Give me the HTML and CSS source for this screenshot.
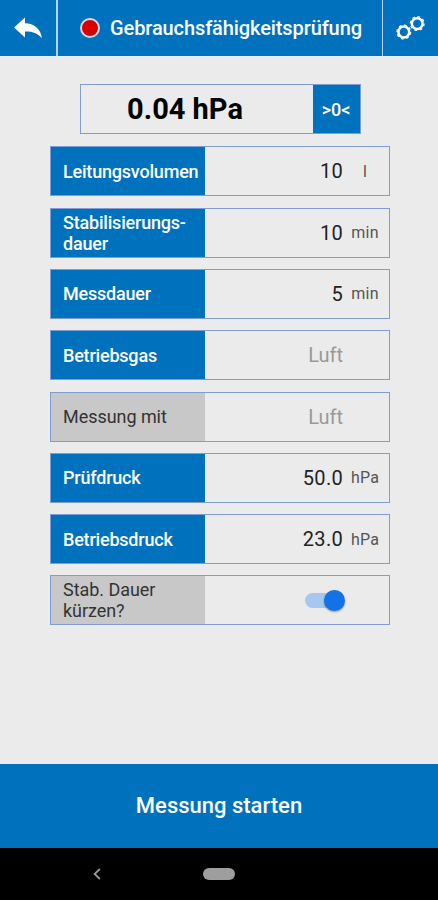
FILE: index.html
```html
<!DOCTYPE html>
<html lang="de">
<head>
    <meta charset="UTF-8">
    <meta name="viewport" content="width=device-width, initial-scale=1.0">
    <title>Gebrauchsfähigkeitsprüfung</title>
    <link rel="stylesheet" href="styles.css">
</head>
<body>

    <header class="header">
        <button class="back-btn" aria-label="Zurück">
            <svg width="30" height="24" viewBox="0 0 30 24">
                <path d="M1 10.5 L12 0.5 V6.2 C21 6.5 27.5 11.5 29 21.2 C24 16 19 14.4 12 14.6 V20.5 Z" fill="#fff"/>
            </svg>
        </button>
        <div class="title">
            <span class="status-dot"></span>
            <h1>Gebrauchsfähigkeitsprüfung</h1>
        </div>
        <button class="settings-btn" aria-label="Einstellungen">
            <svg width="30" height="26" viewBox="0 0 30 26" fill="none" stroke="#fff">
                <circle cx="7.8" cy="17" r="5.4" stroke-width="2.5"/>
                <circle cx="7.8" cy="17" r="6.9" stroke-width="1.2" stroke-dasharray="2.71 2.71"/>
                <circle cx="21.2" cy="8.6" r="5.4" stroke-width="2.5"/>
                <circle cx="21.2" cy="8.6" r="6.9" stroke-width="1.2" stroke-dasharray="2.71 2.71"/>
            </svg>
        </button>
    </header>

    <main class="content">
        <div class="display">
            <div class="reading">0.04 hPa</div>
            <button class="zero-btn">&gt;0&lt;</button>
        </div>

        <div class="rows">
            <div class="row">
                <div class="label">Leitungsvolumen</div>
                <div class="value">10</div>
                <div class="unit">l</div>
            </div>
            <div class="row">
                <div class="label">Stabilisierungs-<br>dauer</div>
                <div class="value">10</div>
                <div class="unit">min</div>
            </div>
            <div class="row">
                <div class="label">Messdauer</div>
                <div class="value">5</div>
                <div class="unit">min</div>
            </div>
            <div class="row">
                <div class="label">Betriebsgas</div>
                <div class="value muted">Luft</div>
                <div class="unit"></div>
            </div>
            <div class="row">
                <div class="label grey">Messung mit</div>
                <div class="value muted">Luft</div>
                <div class="unit"></div>
            </div>
            <div class="row">
                <div class="label">Prüfdruck</div>
                <div class="value">50.0</div>
                <div class="unit">hPa</div>
            </div>
            <div class="row">
                <div class="label">Betriebsdruck</div>
                <div class="value">23.0</div>
                <div class="unit">hPa</div>
            </div>
            <div class="row">
                <div class="label grey">Stab. Dauer<br>kürzen?</div>
                <div class="value"><span class="switch"><span class="thumb"></span></span></div>
                <div class="unit"></div>
            </div>
        </div>
    </main>

    <button class="start-btn">Messung starten</button>

    <nav class="navbar">
        <svg class="nav-back" width="10" height="14" viewBox="0 0 10 14">
            <path d="M7.8 2 L2.6 7 L7.8 12" fill="none" stroke="#999" stroke-width="1.8"/>
        </svg>
        <span class="nav-home"></span>
    </nav>

</body>
</html>
```
FILE: styles.css
```css
* {
    box-sizing: border-box;
}
body {
    font-family: Roboto, "Liberation Sans", sans-serif;
    display: flex;
    flex-direction: column;
    height: 900px;
    margin: 0;
    background-color: #ebebeb;
    color: #222;
}
button {
    padding: 0;
    border: none;
    background: #0071bc;
    color: #fff;
    font-family: inherit;
    cursor: pointer;
}
.header {
    display: flex;
    height: 57px;
    border-bottom: 1px solid #e4eef8;
    background: #0071bc;
    color: #fff;
}
.back-btn {
    width: 58px;
    padding-top: 5px;
    border-right: 2px solid #b5d3ec;
}
.title {
    flex: 1;
    display: flex;
    align-items: center;
    padding-left: 22px;
}
.title h1 {
    margin: 0 0 0 10px;
    font-size: 20px;
    font-weight: 500;
    letter-spacing: -0.1px;
    white-space: nowrap;
}
.status-dot {
    width: 20px;
    height: 20px;
    border: 2px solid #d9d9e6;
    border-radius: 50%;
    background: #d90000;
}
.settings-btn {
    width: 56px;
    padding-top: 2px;
    border-left: 1px solid #b5d3ec;
}
.content {
    flex: 1;
    padding-top: 27.4px;
}
.display {
    display: flex;
    width: 281px;
    height: 50px;
    margin: 0 0 0 79.5px;
    border: 1px solid #7f9dd2;
}
.reading {
    flex: 1;
    padding-right: 23px;
    line-height: 49px;
    text-align: center;
    font-size: 29px;
    font-weight: 700;
    color: #000;
}
.zero-btn {
    width: 47px;
    font-size: 18px;
    font-weight: 500;
}
.rows {
    display: grid;
    gap: 11.3px;
    width: 340px;
    margin: 12px 0 0 50px;
}
.row {
    display: flex;
    align-items: center;
    height: 50px;
    border: 1px solid #7f9dd2;
}
.label {
    display: flex;
    align-items: center;
    width: 154px;
    height: 100%;
    padding-left: 12px;
    background: #0071bc;
    color: #fff;
    font-size: 18px;
    font-weight: 500;
    letter-spacing: -0.2px;
    line-height: 21px;
}
.label.grey {
    background: #c8c8c8;
    color: #333;
    font-weight: 400;
    letter-spacing: -0.05px;
}
.value {
    flex: 1;
    text-align: right;
    font-size: 20px;
    letter-spacing: 0.3px;
}
.value.muted {
    color: #999;
    letter-spacing: 0;
}
.unit {
    width: 46px;
    padding-right: 2px;
    text-align: center;
    font-size: 16px;
    letter-spacing: 0.2px;
    color: #555;
}
.switch {
    display: flex;
    align-items: center;
    justify-content: flex-end;
    width: 38px;
    height: 15px;
    margin-left: auto;
    border-radius: 8px;
    background: #a6c8ec;
}
.thumb {
    flex: none;
    width: 21px;
    height: 21px;
    margin-right: -2px;
    border-radius: 50%;
    background: #1273e6;
    box-shadow: 0 1px 2px rgba(0, 0, 0, 0.4);
}
.start-btn {
    height: 84px;
    padding-bottom: 2px;
    font-size: 22px;
    font-weight: 500;
    letter-spacing: 0;
}
.navbar {
    display: grid;
    grid-template-columns: 1fr auto 1fr;
    align-items: center;
    height: 52px;
    background: #000;
}
.nav-back {
    margin-left: 92px;
}
.nav-home {
    width: 32px;
    height: 12px;
    border-radius: 6px;
    background: #9e9e9e;
}
```
